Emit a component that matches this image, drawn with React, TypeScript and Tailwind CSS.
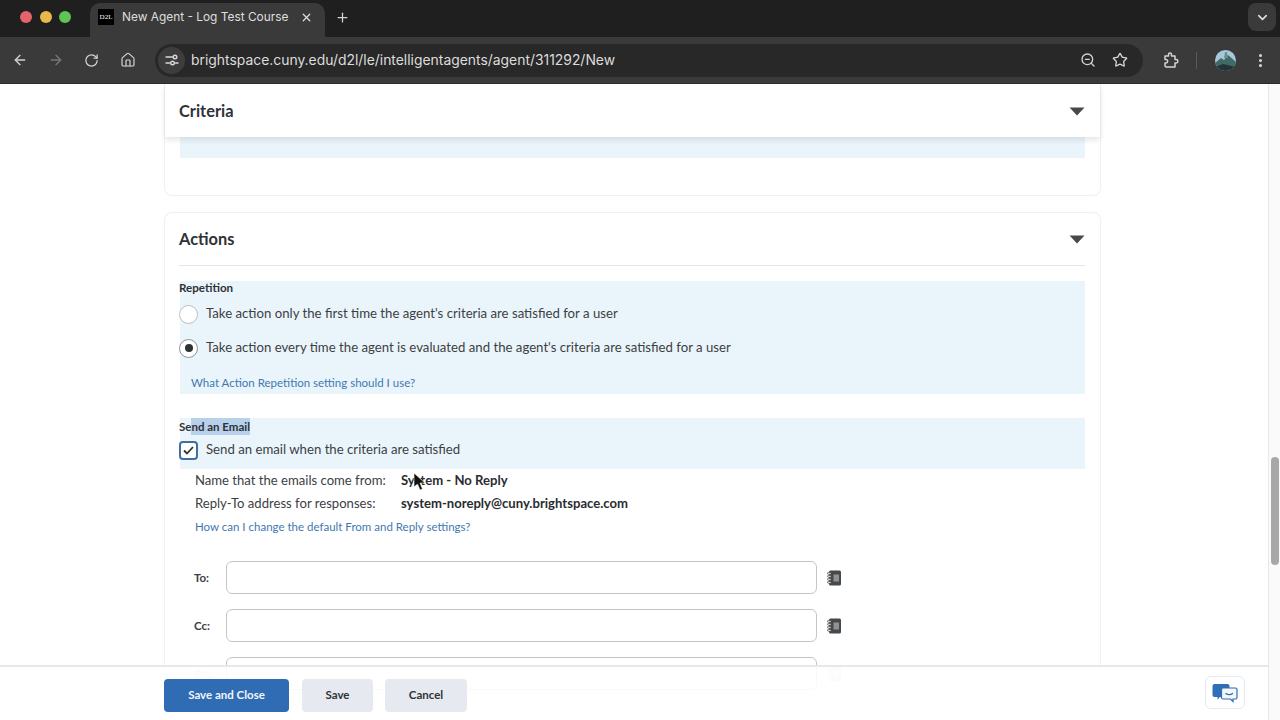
import {
  ArrowLeft,
  ArrowRight,
  ChevronDown,
  EllipsisVertical,
  House,
  Plus,
  RotateCw,
  Star,
  X,
  ZoomOut,
} from "lucide-react";

const NotebookIcon = ({ faint = false }: { faint?: boolean }) => (
  <svg width="14" height="16" viewBox="0 0 14 16" className={faint ? "opacity-20" : ""}>
    <rect x="2" y="0.5" width="12" height="15" rx="1.5" fill="#46494b" />
    <rect x="6.5" y="4.5" width="5.5" height="7" fill="#8f9294" />
    <g fill="#fff" stroke="#46494b" strokeWidth="0.8">
      <rect x="0.5" y="2.4" width="3.6" height="1.8" rx="0.9" />
      <rect x="0.5" y="5.4" width="3.6" height="1.8" rx="0.9" />
      <rect x="0.5" y="8.4" width="3.6" height="1.8" rx="0.9" />
      <rect x="0.5" y="11.4" width="3.6" height="1.8" rx="0.9" />
    </g>
  </svg>
);

const ChatIcon = () => (
  <svg width="26" height="20" viewBox="0 0 26 20">
    <path d="M2.5 1h13A2 2 0 0 1 17.500 3v9a2 2 0 0 1-2 2H8l-2.500 2.500V14h-3a2 2 0 0 1-2-2V3a2 2 0 0 1 2-2z" fill="#2f6fb7" />
    <path d="M11 5h12.500A1.500 1.500 0 0 1 25 6.500v8a1.500 1.500 0 0 1-1.500 1.500H21v2.500L18.500 16H11a1.500 1.500 0 0 1-1.500-1.500v-8A1.500 1.500 0 0 1 11 5z" fill="#f4f8fc" stroke="#2f6fb7" strokeWidth="1.200" />
    <path d="M14 10.500c1.500 1.500 5 1.500 6.500 0" fill="none" stroke="#2f6fb7" strokeWidth="1.300" strokeLinecap="round" />
  </svg>
);

const CollapseCaret = () => (
  <svg width="16" height="10" viewBox="0 0 16 10">
    <path d="M0.500 1.500h15L8 9.500z" fill="#46494c" />
  </svg>
);

const ExtensionIcon = () => (
  <svg width="17" height="17" viewBox="0 0 17 17" fill="none" stroke="#d4d4d4" strokeWidth="1.500" strokeLinejoin="round" className="ml-[20px]">
    <path d="M2 4h3.500V2.500a1.500 1.500 0 0 1 3 0V4H12v3.500h1.200a1.700 1.700 0 0 1 0 3.400H12V15H3.500a1.500 1.500 0 0 1-1.500-1.500V11h1a1.700 1.700 0 0 0 0-3.400H2z" />
  </svg>
);

const RadioOption = ({ checked, label }: { checked?: boolean; label: string }) => (
  <div className="flex items-center gap-2 h-[20px]">
    <span className={`w-[19px] h-[19px] rounded-full border bg-white flex items-center justify-center shrink-0 ${checked ? "border-[#8f9396]" : "border-[#bcc0c3]"}`}>
      {checked && <span className="w-[8px] h-[8px] rounded-full bg-[#2f3235]" />}
    </span>
    <span className="text-[13.200px] text-[#3d4043]">{label}</span>
  </div>
);

const AddressRow = ({ label, faint }: { label: string; faint?: boolean }) => (
  <div className="flex items-center h-[33px] pl-[15px]">
    <span className={`w-[32px] text-[11.500px] font-bold ${faint ? "text-[#c9cbcd]" : "text-[#3d4043]"}`}>{label}</span>
    <div className="w-[591px] h-full rounded-md border border-[#c2c5c8] bg-white" />
    <span className="ml-[10px] flex">
      <NotebookIcon faint={faint} />
    </span>
  </div>
);

const BrowserChrome = () => (
  <div className="shrink-0 font-['Inter',sans-serif]">
    <div className="h-[37px] bg-[#1f1f1f] flex items-end">
      <div className="flex items-center gap-[7.500px] pl-[20px] w-[90px] self-center mb-[3px]">
        <span className="w-[12px] h-[12px] rounded-full bg-[#e5636a]" />
        <span className="w-[12px] h-[12px] rounded-full bg-[#e9b84a]" />
        <span className="w-[12px] h-[12px] rounded-full bg-[#5fc454]" />
      </div>
      <div className="w-[235px] h-[34px] bg-[#3a3a3a] rounded-t-[10px] flex items-center pl-[8px] pr-[12px] pb-[6px] text-[#dedede]">
        <span className="w-[16px] h-[16px] bg-black text-white text-[7px] font-['Liberation_Serif',serif] flex items-center justify-center shrink-0">D2L</span>
        <span className="ml-[8px] text-[11.900px] flex-1 whitespace-nowrap">New Agent - Log Test Course</span>
        <X size={13} strokeWidth={2.200} />
      </div>
      <div className="self-center ml-[10px] mb-[3px] text-[#d5d5d5]">
        <Plus size={15} strokeWidth={2} />
      </div>
      <div className="ml-auto mr-[4px] self-center mb-[3px] w-[28px] h-[28px] rounded-lg bg-[#3a3a3a] flex items-center justify-center text-[#e0e0e0]">
        <ChevronDown size={15} strokeWidth={2.500} />
      </div>
    </div>
    <div className="h-[47px] bg-[#3a3a3a] flex items-center text-[#d4d4d4] border-b border-[#2c2c2c]">
      <div className="flex items-center w-[155px] pl-[12px] gap-[20px]">
        <ArrowLeft size={16} strokeWidth={2} />
        <ArrowRight size={16} strokeWidth={2} className="text-[#777]" />
        <RotateCw size={15} strokeWidth={2} />
        <House size={16} strokeWidth={1.800} className="ml-[1px]" />
      </div>
      <div className="w-[988px] h-[33px] rounded-full bg-[#282828] flex items-center pl-[3px] pr-[15px]">
        <span className="w-[27px] h-[27px] rounded-full bg-[#3d3d3d] flex items-center justify-center">
          <svg width="14" height="14" viewBox="0 0 14 14" fill="none" stroke="#d8d8d8" strokeWidth="1.400">
            <path d="M1 4h6.500M1 10h3.500" strokeLinecap="round" />
            <circle cx="10" cy="4" r="1.800" />
            <circle cx="7.500" cy="10" r="1.800" />
            <path d="M10.500 10H13" strokeLinecap="round" />
          </svg>
        </span>
        <span className="ml-[6px] text-[13.900px] text-[#dcdcdc] flex-1 whitespace-nowrap">brightspace.cuny.edu/d2l/le/intelligentagents/agent/311292/New</span>
        <ZoomOut size={16} strokeWidth={2} />
        <Star size={16} strokeWidth={2} className="ml-[16px]" />
      </div>
      <ExtensionIcon />
      <span className="ml-[16px] w-px h-[17px] bg-[#5a5a5a]" />
      <svg width="21" height="21" viewBox="0 0 21 21" className="ml-[18px]">
        <defs>
          <clipPath id="avatar">
            <circle cx="10.500" cy="10.500" r="10.500" />
          </clipPath>
        </defs>
        <g clipPath="url(#avatar)">
          <rect width="21" height="21" fill="#a9c7dc" />
          <path d="M0 13l6-5 3 2 4-5 8 7v9H0z" fill="#3f6a66" />
          <path d="M0 17l8-3 13 3v4H0z" fill="#24343a" />
          <path d="M10 2l2 0 1 6h-4z" fill="#6f8f8a" />
        </g>
      </svg>
      <EllipsisVertical size={17} strokeWidth={2.400} className="ml-[16px]" />
    </div>
  </div>
);

const MouseCursor = () => (
  <svg width="13" height="19" viewBox="0 0 13 19" className="absolute left-[413px] top-[388px]">
    <path d="M1 1v14l3.500-3 2.500 6 2.500-1-2.500-6H12z" fill="#111" stroke="#fff" strokeWidth="0.600" />
  </svg>
);

const SaveBar = () => (
  <div className="absolute left-0 right-[12px] bottom-0 h-[55px] bg-white/90 border-t-2 border-[#e6e8ea] flex items-center pl-[164px] pr-[23px] text-[11.500px] font-bold">
    <button className="w-[125px] h-[33px] mt-[3px] rounded bg-[#2f6cb3] text-[#f2f6fb]">Save and Close</button>
    <button className="ml-[13px] w-[71px] h-[33px] mt-[3px] rounded bg-[#e6eaf0] text-[#2f3235]">Save</button>
    <button className="ml-[12px] w-[82px] h-[33px] mt-[3px] rounded bg-[#e6eaf0] text-[#2f3235]">Cancel</button>
    <button className="ml-auto mb-[2px] w-[40px] h-[33px] rounded-md border border-[#e6eaf0] bg-white flex items-center justify-center">
      <ChatIcon />
    </button>
  </div>
);

export default function App() {
  return (
    <div className="w-[1280px] h-[720px] overflow-hidden flex flex-col bg-white">
      <BrowserChrome />
      <div className="relative flex-1 flex min-h-0 font-['Lato',sans-serif]">
        <div className="flex-1 overflow-hidden pl-[164px]">
          {/* Criteria card, scrolled so only the sticky header shows */}
          <div className="w-[937px] h-[112px] rounded-b-lg border border-t-0 border-[#eef0f1]">
            <div className="h-[53px] pl-[14px] pr-[15px] pt-[1px] flex items-center justify-between shadow-[0_3px_6px_rgba(0,0,0,0.1)] relative">
              <h2 className="text-[16.400px] font-bold text-[#2f3235]">Criteria</h2>
              <span className="mr-[0px] flex">
                <CollapseCaret />
              </span>
            </div>
            <div className="mx-[15px] w-[905px] h-[21px] bg-[#eaf5fb]" />
          </div>

          {/* Actions card */}
          <div className="w-[937px] mt-[16px] h-[600px] rounded-t-lg border border-b-0 border-[#eef0f1] pl-[14px] pr-[15px]">
            <div className="h-[53px] flex items-center justify-between border-b border-[#e6e8ea]">
              <h2 className="text-[16.400px] font-bold text-[#2f3235]">Actions</h2>
              <CollapseCaret />
            </div>

            <section className="mt-[15px] w-[906px] h-[113px] bg-[linear-gradient(to_right,transparent_1px,#eaf5fb_1px)]">
              <div className="text-[11.600px] font-bold text-[#2f3235] h-[14px] flex items-center">Repetition</div>
              <div className="mt-[9px]">
                <RadioOption label="Take action only the first time the agent's criteria are satisfied for a user" />
              </div>
              <div className="mt-[14px]">
                <RadioOption checked label="Take action every time the agent is evaluated and the agent's criteria are satisfied for a user" />
              </div>
              <a className="block mt-[16px] ml-[12px] text-[11.500px] text-[#3f78b0]">What Action Repetition setting should I use?</a>
            </section>

            <section className="mt-[24px] w-[906px] h-[51px] bg-[linear-gradient(to_right,transparent_1px,#eaf5fb_1px)]">
              <div className="text-[11.500px] font-bold text-[#2f3235] h-[17px] flex items-center">
                Se<span className="bg-[#b7d0ec]">nd an Email</span>
              </div>
              <div className="flex items-center gap-2 mt-[5px] h-[20px]">
                <span className="w-[19px] h-[19px] rounded-[4px] border-2 border-[#3f6ea3] bg-white flex items-center justify-center shrink-0">
                  <svg width="11" height="9" viewBox="0 0 11 9" fill="none" stroke="#2f3235" strokeWidth="1.800">
                    <path d="M1 4.500l3 3L10 1" />
                  </svg>
                </span>
                <span className="text-[13.200px] text-[#3d4043]">Send an email when the criteria are satisfied</span>
              </div>
            </section>

            <div className="pl-[16px] text-[13.100px]">
              <div className="flex items-center h-[23px]">
                <span className="w-[206px] text-[#3d4043]">Name that the emails come from:</span>
                <span className="font-bold text-[#2a2d30]">System - No Reply</span>
              </div>
              <div className="flex items-center h-[23px]">
                <span className="w-[206px] text-[#3d4043]">Reply-To address for responses:</span>
                <span className="font-bold text-[#2a2d30]">system-noreply@cuny.brightspace.com</span>
              </div>
              <a className="block mt-[3px] text-[11.500px] text-[#3f78b0]">How can I change the default From and Reply settings?</a>
            </div>

            <div className="mt-[26px] flex flex-col gap-[15px]">
              <AddressRow label="To:" />
              <AddressRow label="Cc:" />
              <AddressRow label="Bcc:" faint />
            </div>
          </div>
        </div>

        <div className="w-[12px] border-l border-[#e8e8e8] bg-[#fafafa] pt-[373px] pl-[2px] shrink-0">
          <div className="w-[8px] h-[108px] rounded-full bg-[#a8a8a8]" />
        </div>

        <SaveBar />
        <MouseCursor />
      </div>
    </div>
  );
}
